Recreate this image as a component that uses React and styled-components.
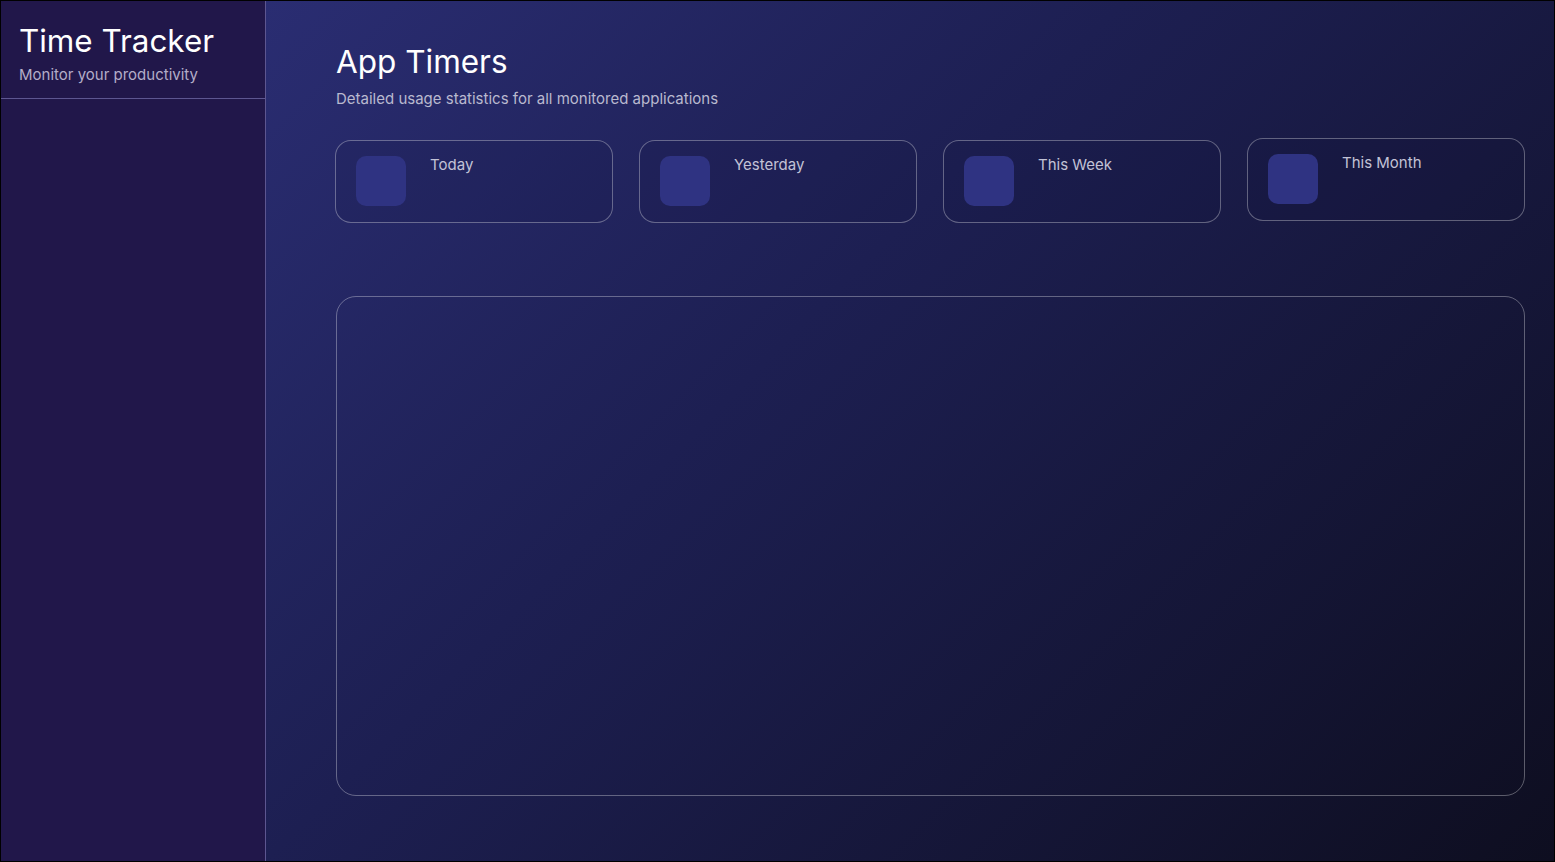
import React from "react";
import styled, { createGlobalStyle } from "styled-components";

const Global = createGlobalStyle`
  * { box-sizing: border-box; }
  html, body { margin: 0; padding: 0; }
  body { font-family: Inter, "Noto Sans", sans-serif; background: #000; }
`;

const Frame = styled.div`
  display: flex;
  height: 862px;
  border: 1px solid #000;
  overflow: hidden;
`;

const Sidebar = styled.aside`
  width: 265px;
  flex-shrink: 0;
  background: #21174a;
  border-right: 1px solid #5d5690;
  display: flex;
  flex-direction: column;
`;

const SideHeader = styled.div`
  padding: 21px 18px 14px;
  border-bottom: 1px solid #5d5690;
`;

const AppTitle = styled.h1`
  margin: 0;
  font-size: 31.4px;
  font-weight: 400;
  line-height: 38px;
  color: #ffffff;
`;

const AppSub = styled.p`
  margin: 6px 0 0;
  font-size: 15px;
  line-height: 18px;
  color: #b3adc8;
`;

const Main = styled.main`
  flex: 1;
  background: linear-gradient(135deg, #2a2d72 0%, #1d1f52 40%, #0e0e20 100%);
  padding: 40px 29px 0 69px;
  display: flex;
  flex-direction: column;
`;

const Title = styled.h2`
  margin: 0 0 0 1px;
  font-size: 31.5px;
  font-weight: 400;
  line-height: 42px;
  color: #ffffff;
`;

const Subtitle = styled.p`
  margin: 6px 0 0 1px;
  font-size: 15px;
  line-height: 20px;
  color: #b9b9cf;
`;

const Cards = styled.div`
  margin-top: 31px;
  display: grid;
  grid-template-columns: repeat(4, 1fr);
  gap: 26px;
  align-items: start;
`;

const Card = styled.div`
  height: 83px;
  border: 1px solid rgba(255, 255, 255, 0.32);
  border-radius: 16px;
  padding: 15px 20px;
  display: flex;
  gap: 24px;
  background: rgba(20, 20, 60, 0.12);
  transform: translateY(${(p) => (p.$raised ? "-2px" : "0")});
`;

const Icon = styled.div`
  width: 50px;
  height: 50px;
  border-radius: 10px;
  background: #2f3382;
  flex-shrink: 0;
`;

const CardLabel = styled.span`
  font-size: 15px;
  line-height: 18px;
  color: #c2c2d6;
  padding-top: 0;
`;

const Panel = styled.section`
  margin-top: 73px;
  height: 500px;
  border: 1px solid rgba(255, 255, 255, 0.32);
  border-radius: 20px;
  margin-left: 1px;
`;

const periods = ["Today", "Yesterday", "This Week", "This Month"];

export default function App() {
  return (
    <>
      <Global />
      <Frame>
        <Sidebar>
          <SideHeader>
            <AppTitle>Time Tracker</AppTitle>
            <AppSub>Monitor your productivity</AppSub>
          </SideHeader>
        </Sidebar>
        <Main>
          <Title>App Timers</Title>
          <Subtitle>Detailed usage statistics for all monitored applications</Subtitle>
          <Cards>
            {periods.map((p, i) => (
              <Card key={p} $raised={i === 3}>
                <Icon />
                <CardLabel>{p}</CardLabel>
              </Card>
            ))}
          </Cards>
          <Panel />
        </Main>
      </Frame>
    </>
  );
}
